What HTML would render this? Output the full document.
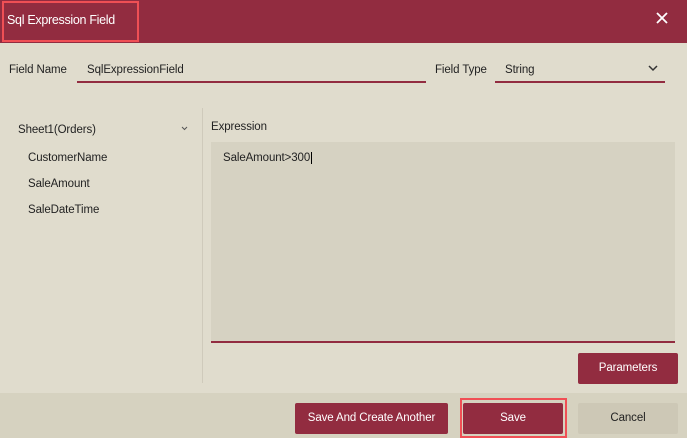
<!DOCTYPE html>
<html><head><style>
*{margin:0;padding:0;box-sizing:border-box}
body{width:687px;height:438px;background:#e0dccd;font-family:"Liberation Sans",sans-serif;font-size:11.5px;letter-spacing:-0.1px;color:#222;position:relative;overflow:hidden}
.a{position:absolute}
.hdr{left:0;top:0;width:687px;height:43px;background:#922c40}
.btn{position:absolute;background:#922c40;color:#fff;border-radius:2px;text-align:center;line-height:31px;font-size:11.5px}
</style></head><body>
<div class="a hdr"></div>
<div class="a" style="left:2px;top:1px;width:137px;height:41px;border:2px solid #f04f55"></div>
<div class="a" style="left:7px;top:13px;color:#fff;font-size:12.5px;letter-spacing:-0.3px">Sql Expression Field</div>
<svg class="a" style="left:656px;top:12px" width="12" height="12"><path d="M1 1L11 11M11 1L1 11" stroke="#fff" stroke-width="1.8"/></svg>
<div class="a" style="left:9px;top:64px">Field Name</div>
<div class="a" style="left:87px;top:64px">SqlExpressionField</div>
<div class="a" style="left:77px;top:81px;width:349px;height:2px;background:#922c40"></div>
<div class="a" style="left:435px;top:64px">Field Type</div>
<div class="a" style="left:505px;top:64px">String</div>
<svg class="a" style="left:648px;top:64px" width="10" height="8"><path d="M1 2L5 6L9 2" stroke="#333" stroke-width="1.5" fill="none"/></svg>
<div class="a" style="left:495px;top:81px;width:170px;height:2px;background:#922c40"></div>
<div class="a" style="left:202px;top:108px;width:1px;height:275px;background:#cfcabb"></div>
<div class="a" style="left:18px;top:124px">Sheet1(Orders)</div>
<svg class="a" style="left:181px;top:126px" width="7" height="5"><path d="M1 1L3.5 3.5L6 1" stroke="#555" fill="none"/></svg>
<div class="a" style="left:28px;top:152px">CustomerName</div>
<div class="a" style="left:28px;top:178px">SaleAmount</div>
<div class="a" style="left:28px;top:204px">SaleDateTime</div>
<div class="a" style="left:211px;top:121px">Expression</div>
<div class="a" style="left:211px;top:142px;width:464px;height:201px;background:#d6d2c2;border-bottom:2px solid #922c40"></div>
<div class="a" style="left:223px;top:152px">SaleAmount&gt;300<span style="border-left:1px solid #000;margin-left:1px"></span></div>
<div class="btn" style="left:578px;top:353px;width:100px">Parameters</div>
<div class="a" style="left:0;top:393px;width:687px;height:45px;background:#d6d2c0"></div>
<div class="btn" style="left:295px;top:403px;width:153px">Save And Create Another</div>
<div class="a" style="left:460px;top:398px;width:107px;height:40px;border:2px solid #f04f55"></div>
<div class="btn" style="left:463px;top:403px;width:100px">Save</div>
<div class="btn" style="left:578px;top:403px;width:100px;background:#cdc8b6;color:#222">Cancel</div>
</body></html>
